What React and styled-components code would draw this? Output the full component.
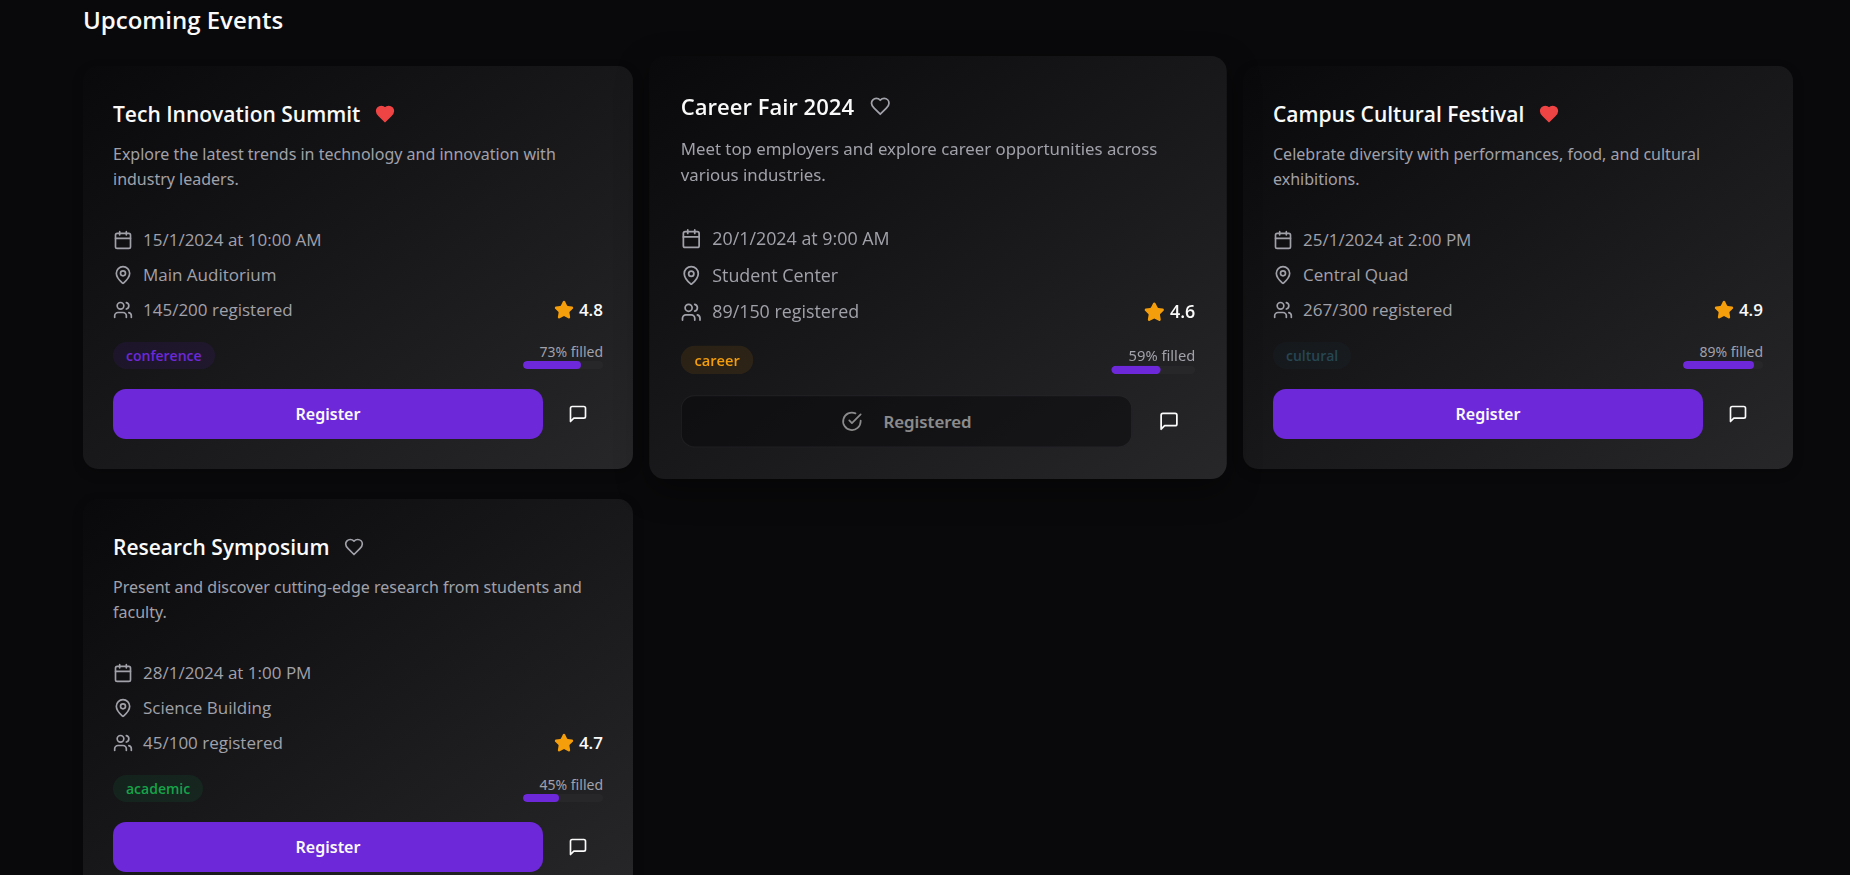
import React from "react";
import styled, { createGlobalStyle, css } from "styled-components";

const GlobalStyle = createGlobalStyle`
  *, *::before, *::after { box-sizing: border-box; }
  body {
    margin: 0;
    background: #09090b;
    color: #fafafa;
    font-family: "Open Sans", "Noto Sans", sans-serif;
    font-size: 17px;
    line-height: 25px;
  }
  h2, h3, p, ul { margin: 0; padding: 0; }
  button { font: inherit; color: inherit; border: 0; background: none; cursor: pointer; }
`;

const Page = styled.main`
  height: 100vh;
  overflow-y: auto;
  scrollbar-width: none;
  padding: 0 57px 30px 83px;
`;

const SectionTitle = styled.h2`
  padding: 2px 0 29px;
  font-size: 24px;
  font-weight: 600;
  line-height: 35px;
`;

const Grid = styled.div`
  display: grid;
  grid-template-columns: repeat(3, minmax(0, 1fr));
  gap: 30px;
`;

const Card = styled.article`
  padding: 30px;
  border-radius: 15px;
  background: linear-gradient(145deg, #09090b, #27272a);
  box-shadow: 0 4px 12px rgba(0, 0, 0, 0.2);
  ${(p) =>
    p.$raised &&
    css`
      z-index: 1;
      transform: scale(1.05);
      box-shadow: 0 10px 30px rgba(0, 0, 0, 0.4);
    `}
`;

const CardHeader = styled.header`
  display: flex;
  align-items: center;
  gap: 10px;
  height: 36px;
  margin-bottom: 10px;
`;

const CardTitle = styled.h3`
  font-size: 21px;
  font-weight: 600;
  line-height: 36px;
`;

const LikeButton = styled.button`
  display: flex;
  padding: 5px;
  color: ${(p) => (p.$liked ? "#ef4444" : "#a1a1aa")};
`;

const Description = styled.p`
  color: #a1a1aa;
  font-family: "Noto Sans", sans-serif;
  font-size: 16px;
`;

const Details = styled.ul`
  display: flex;
  flex-direction: column;
  gap: 10px;
  margin: 35px 0 20px;
  list-style: none;
`;

const Detail = styled.li`
  display: flex;
  align-items: center;
  gap: 10px;
  color: #a1a1aa;
`;

const Rating = styled.span`
  display: flex;
  align-items: center;
  gap: 5px;
  margin-left: auto;
  color: #fafafa;
  font-weight: 600;
`;

const StatusRow = styled.div`
  display: flex;
  align-items: flex-end;
  justify-content: space-between;
  margin-bottom: 20px;
`;

const Badge = styled.span`
  padding: 0 13px;
  border-radius: 14px;
  background: ${(p) => p.$color}1a;
  color: ${(p) => p.$color};
  font-size: 14px;
  font-weight: 600;
  line-height: 27px;
`;

const Capacity = styled.div`
  width: 80px;
  color: #a1a1aa;
  font-family: "Noto Sans", sans-serif;
  font-size: 14px;
  line-height: 18px;
  text-align: right;
`;

const Track = styled.div`
  height: 8px;
  overflow: hidden;
  border-radius: 4px;
  background: #27272a;
`;

const Fill = styled.div`
  height: 100%;
  border-radius: 4px;
  background: #6d28d9;
`;

const Actions = styled.div`
  display: flex;
  gap: 10px;
`;

const RegisterButton = styled.button`
  display: flex;
  flex: 1;
  align-items: center;
  justify-content: center;
  gap: 20px;
  height: 50px;
  border-radius: 13px;
  background: #6d28d9;
  font-family: "Noto Sans", sans-serif;
  font-size: 16px;
  font-weight: 600;
  &:disabled {
    border: 1px solid #27272a;
    background: #09090b;
    color: #fafafa;
    opacity: 0.5;
    cursor: default;
  }
`;

const MessageButton = styled.button`
  display: grid;
  place-items: center;
  width: 50px;
  height: 50px;
  padding: 0;
`;

const Svg = styled.svg`
  flex: none;
  display: block;
  width: 20px;
  height: 20px;
  fill: ${(p) => (p.$filled ? "currentColor" : "none")};
  stroke: currentColor;
  stroke-width: 2;
  stroke-linecap: round;
  stroke-linejoin: round;
`;

const StarSvg = styled(Svg)`
  color: #f59e0b;
`;

const Icon = ({ as: Shape = Svg, filled, children }) => (
  <Shape viewBox="0 0 24 24" aria-hidden="true" $filled={filled}>
    {children}
  </Shape>
);

const HeartIcon = ({ filled }) => (
  <Icon filled={filled}>
    <path d="M19 14c1.49-1.46 3-3.21 3-5.5A5.5 5.5 0 0 0 16.5 3c-1.76 0-3 .5-4.5 2-1.5-1.5-2.74-2-4.5-2A5.5 5.5 0 0 0 2 8.5c0 2.3 1.5 4.05 3 5.5l7 7Z" />
  </Icon>
);

const CalendarIcon = () => (
  <Icon>
    <path d="M8 2v4M16 2v4M3 10h18" />
    <rect width="18" height="18" x="3" y="4" rx="2" />
  </Icon>
);

const PinIcon = () => (
  <Icon>
    <path d="M20 10c0 4.993-5.539 10.193-7.399 11.799a1 1 0 0 1-1.202 0C9.539 20.193 4 14.993 4 10a8 8 0 0 1 16 0" />
    <circle cx="12" cy="10" r="3" />
  </Icon>
);

const UsersIcon = () => (
  <Icon>
    <path d="M16 21v-2a4 4 0 0 0-4-4H6a4 4 0 0 0-4 4v2" />
    <circle cx="9" cy="7" r="4" />
    <path d="M22 21v-2a4 4 0 0 0-3-3.87M16 3.13a4 4 0 0 1 0 7.75" />
  </Icon>
);

const StarIcon = () => (
  <Icon as={StarSvg} filled>
    <path d="M11.525 2.295a.53.53 0 0 1 .95 0l2.31 4.679a2.123 2.123 0 0 0 1.595 1.16l5.166.756a.53.53 0 0 1 .294.904l-3.736 3.638a2.123 2.123 0 0 0-.611 1.878l.882 5.14a.53.53 0 0 1-.771.56l-4.618-2.428a2.122 2.122 0 0 0-1.973 0L6.396 21.01a.53.53 0 0 1-.77-.56l.881-5.139a2.122 2.122 0 0 0-.611-1.879L2.16 9.795a.53.53 0 0 1 .294-.906l5.165-.755a2.122 2.122 0 0 0 1.597-1.16z" />
  </Icon>
);

const CheckIcon = () => (
  <Icon>
    <path d="M22 11.08V12a10 10 0 1 1-5.93-9.14" />
    <path d="m9 11 3 3L22 4" />
  </Icon>
);

const MessageIcon = () => (
  <Icon>
    <path d="M21 15a2 2 0 0 1-2 2H7l-4 4V5a2 2 0 0 1 2-2h14a2 2 0 0 1 2 2z" />
  </Icon>
);

const categoryColors = {
  conference: "#6d28d9",
  career: "#f59e0b",
  cultural: "#264653",
  academic: "#16a34a",
};

const events = [
  {
    title: "Tech Innovation Summit",
    description: "Explore the latest trends in technology and innovation with industry leaders.",
    date: "15/1/2024 at 10:00 AM",
    place: "Main Auditorium",
    taken: 145,
    seats: 200,
    rating: "4.8",
    category: "conference",
    liked: true,
  },
  {
    title: "Career Fair 2024",
    description: "Meet top employers and explore career opportunities across various industries.",
    date: "20/1/2024 at 9:00 AM",
    place: "Student Center",
    taken: 89,
    seats: 150,
    rating: "4.6",
    category: "career",
    registered: true,
    raised: true,
  },
  {
    title: "Campus Cultural Festival",
    description: "Celebrate diversity with performances, food, and cultural exhibitions.",
    date: "25/1/2024 at 2:00 PM",
    place: "Central Quad",
    taken: 267,
    seats: 300,
    rating: "4.9",
    category: "cultural",
    liked: true,
  },
  {
    title: "Research Symposium",
    description: "Present and discover cutting-edge research from students and faculty.",
    date: "28/1/2024 at 1:00 PM",
    place: "Science Building",
    taken: 45,
    seats: 100,
    rating: "4.7",
    category: "academic",
  },
];

function EventCard({ event }) {
  const share = (event.taken / event.seats) * 100;
  return (
    <Card $raised={event.raised}>
      <CardHeader>
        <CardTitle>{event.title}</CardTitle>
        <LikeButton type="button" aria-label="Like" aria-pressed={!!event.liked} $liked={event.liked}>
          <HeartIcon filled={event.liked} />
        </LikeButton>
      </CardHeader>
      <Description>{event.description}</Description>
      <Details>
        <Detail>
          <CalendarIcon />
          {event.date}
        </Detail>
        <Detail>
          <PinIcon />
          {event.place}
        </Detail>
        <Detail>
          <UsersIcon />
          {`${event.taken}/${event.seats} registered`}
          <Rating>
            <StarIcon />
            {event.rating}
          </Rating>
        </Detail>
      </Details>
      <StatusRow>
        <Badge $color={categoryColors[event.category]}>{event.category}</Badge>
        <Capacity>
          {`${Math.round(share)}% filled`}
          <Track>
            <Fill style={{ width: `${share}%` }} />
          </Track>
        </Capacity>
      </StatusRow>
      <Actions>
        <RegisterButton type="button" disabled={event.registered}>
          {event.registered && <CheckIcon />}
          {event.registered ? "Registered" : "Register"}
        </RegisterButton>
        <MessageButton type="button" aria-label="Message">
          <MessageIcon />
        </MessageButton>
      </Actions>
    </Card>
  );
}

export default function App() {
  return (
    <>
      <GlobalStyle />
      <Page>
        <SectionTitle>Upcoming Events</SectionTitle>
        <Grid>
          {events.map((event) => (
            <EventCard key={event.title} event={event} />
          ))}
        </Grid>
      </Page>
    </>
  );
}
